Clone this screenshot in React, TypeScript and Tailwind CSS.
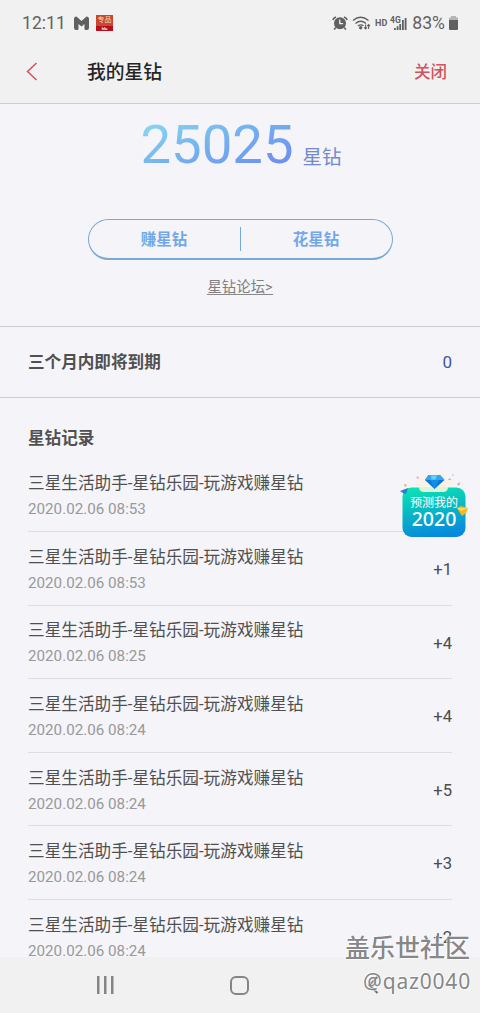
import type { ReactNode } from 'react'

interface StarRecord {
  id: number
  title: string
  time: string
  amount: string | null
}

const TITLE = '三星生活助手-星钻乐园-玩游戏赚星钻'

const records: StarRecord[] = [
  { id: 1, title: TITLE, time: '2020.02.06 08:53', amount: null },
  { id: 2, title: TITLE, time: '2020.02.06 08:53', amount: '+1' },
  { id: 3, title: TITLE, time: '2020.02.06 08:25', amount: '+4' },
  { id: 4, title: TITLE, time: '2020.02.06 08:24', amount: '+4' },
  { id: 5, title: TITLE, time: '2020.02.06 08:24', amount: '+5' },
  { id: 6, title: TITLE, time: '2020.02.06 08:24', amount: '+3' },
  { id: 7, title: TITLE, time: '2020.02.06 08:24', amount: '+2' }
]

function StatusBar() {
  return (
    <div className="flex h-[46px] items-center justify-between pl-[22px] pr-[22px] text-[#626262]">
      <div className="flex items-center">
        <span className="w-[51px] pt-px text-[17.600px] leading-none">12:11</span>
        <svg width="17" height="14" viewBox="0 0 17 14">
          <path
            d="M1 3q0-2.500 2.500-2.500L8.500 5l5-4.500Q16 .5 16 3v9q0 2-2 2h-1.500q-1 0-1-1.500V8l-3 2.500-3-2.500v4.500q0 1.500-1 1.500H3q-2 0-2-2z"
            fill="#606060"
          />
        </svg>
        <div className="ml-[6px] flex h-4 w-[17px] flex-col overflow-hidden bg-[#c9462f]">
          <span className="h-[11px] text-center text-[7px] leading-[11px] text-[#f5dcb4]">
            专品
          </span>
          <span className="h-[5px] bg-[#b5101d] text-center text-[4px] font-bold leading-[5px] text-white">
            hlu
          </span>
        </div>
      </div>

      <div className="flex items-center">
        <svg width="16" height="14" viewBox="0 0 16 14" fill="none">
          <circle cx="8" cy="7.300" r="6" fill="#606060" />
          <path
            d="M.8 4A5 5 0 0 1 4 .9M12 .9A5 5 0 0 1 15.200 4M4 11.500l-2 2M12 11.500l2 2"
            stroke="#606060"
            strokeWidth="1.600"
          />
          <path d="M7.800 3.500v4.200h3.300" stroke="#f1f1f1" strokeWidth="1.300" />
        </svg>
        <svg
          width="19"
          height="15"
          viewBox="0 0 19 15"
          fill="none"
          className="ml-[4px]"
          stroke="#606060"
          strokeWidth="1.400"
        >
          <path d="M1 4.500q7.500-6.500 15.500 0M3.500 7.500q5-4.500 10.500 0M6 10q2.700-2.200 5.500-.2" />
          <circle cx="8.700" cy="11.800" r="1" fill="#606060" />
          <path
            d="M13.600 8.500v4.500M12.200 11.300l1.400 1.700 1.400-1.700M16.600 13V8.500M15.200 10.200l1.400-1.700 1.400 1.700"
            strokeWidth="1.100"
          />
        </svg>
        <span className="ml-[4px] text-[9px] font-bold leading-none">HD</span>
        <svg
          width="17"
          height="15"
          viewBox="0 0 17 15"
          className="ml-[3px]"
          fill="#606060"
        >
          <path d="M4 12h1.800v2H4zM6.700 10.300h1.800V14H6.700zM9.300 8h1.800v6H9.300zM12 4h1.800v10H12zM14.700 2h1.800v12h-1.800z" />
          <text x="0" y="7.300" fontSize="8.500" fontWeight="700">
            4G
          </text>
        </svg>
        <span className="ml-[5px] pt-px text-[17.600px] leading-none">83%</span>
        <svg width="9" height="14" viewBox="0 0 9 14" className="ml-[4px]">
          <path d="M2 0h5v1.500h2v3H0v-3h2z" fill="#b5b5b5" />
          <path d="M0 4h9v9a1 1 0 0 1-1 1H1a1 1 0 0 1-1-1z" fill="#606060" />
        </svg>
      </div>
    </div>
  )
}

function Header() {
  return (
    <header className="h-[104px] shrink-0 border-b border-[#cecece] bg-[#f1f1f1]">
      <StatusBar />
      <div className="flex h-[50px] items-center pl-[26px] pr-[33px]">
        <svg width="12" height="19" viewBox="0 0 12 19" fill="none">
          <path d="M10.500 1L1.500 9.500l9 8.500" stroke="#cf5360" strokeWidth="1.500" />
        </svg>
        <h1 className="ml-[49px] pt-[4px] text-[18.800px] font-medium leading-none text-[#252525]">
          我的星钻
        </h1>
        <button className="ml-auto pt-[4px] text-[16.500px] font-medium leading-none text-[#d0525f]">
          关闭
        </button>
      </div>
    </header>
  )
}

function Balance() {
  return (
    <section className="flex h-[223px] flex-col items-center border-b border-[#cecece]">
      <div className="mt-[8px] flex h-[64px] items-baseline pl-[2px]">
        <span className="bg-linear-to-br from-[#91e0ef] via-[#73b0ef] to-[#6c83ef] bg-clip-text text-[54.500px] leading-[64px] text-transparent">
          25025
        </span>
        <span className="relative top-px ml-[9px] text-[19.500px] leading-none text-[#7289cf]">
          星钻
        </span>
      </div>
      <div className="mt-[43px] flex h-[41px] w-[305px] items-center rounded-full border border-b-2 border-[#78a9d8] text-[15.500px] font-bold text-[#70a8e9]">
        <button className="flex-1 pt-[3px] leading-none">赚星钻</button>
        <div className="h-6 w-px bg-[#70a8df]" />
        <button className="flex-1 pt-[3px] leading-none">花星钻</button>
      </div>
      <a className="mt-[19px] h-[16px] border-b border-[#888888] pt-px text-[14.400px] leading-[16px] text-[#808080]">
        星钻论坛&gt;
      </a>
    </section>
  )
}

function SectionTitle({ children }: { children: ReactNode }) {
  return (
    <h2 className="pt-px text-[16.600px] font-bold leading-[20px] text-[#505050]">
      {children}
    </h2>
  )
}

function RecordRow({ record }: { record: StarRecord }) {
  return (
    <li className="flex h-[73.600px] shrink-0 items-center justify-between border-b border-[#dedee2]">
      <div className="pt-[5px]">
        <p className="h-[24px] text-[16.650px] leading-[24px] text-[#505050]">
          {record.title}
        </p>
        <p className="h-[26px] text-[15.200px] leading-[27px] text-[#999999]">
          {record.time}
        </p>
      </div>
      {record.amount && (
        <span className="pt-[4px] text-[16.600px] text-[#4c4c4c]">
          {record.amount}
        </span>
      )}
    </li>
  )
}

function PredictBadge() {
  return (
    <div className="absolute left-[399px] top-[470px] h-[68px] w-[70px]">
      <svg width="70" height="68" viewBox="0 0 70 68" className="absolute inset-0">
        <defs>
          <linearGradient id="card" x1="0.400" y1="0" x2="0.600" y2="1">
            <stop offset="0" stopColor="#0be0b3" />
            <stop offset=".5" stopColor="#07b3c7" />
            <stop offset="1" stopColor="#0787e0" />
          </linearGradient>
        </defs>
        <path d="M18 16L15 9l8 2 2-8 9 3 9-4 5 8 6-1-5 9z" fill="#fbf1e5" />
        <rect x="3.500" y="17.500" width="63" height="49.500" rx="9" fill="url(#card)" />
        <path d="M20 17h29q0 5-5 5H25q-5 0-5-5z" fill="#ddf5d8" />
        <path d="M29.500 5h11.500l4.500 5L35.500 19 26 10z" fill="#0878d7" />
        <path d="M29.500 5h11.500l4.500 5H26z" fill="#35a5ee" />
        <path d="M31 10h9l-4.500 9z" fill="#158de7" />
        <path d="M32 5.500h6l-1.500 4h-4z" fill="#66d2fa" />
        <path d="M1 21l8-3-2 6-3-1z" fill="#287fd3" />
        <path d="M58 38l4-2 7 2-2 5-4 3z" fill="#ffb51b" />
        <path d="M58 38h11l-7 3z" fill="#ffda57" />
        <path d="M5 14l3 1-2 2z" fill="#f4a43b" />
        <path d="M17 8l2-2 1 3z" fill="#f5a4a0" />
        <path d="M49 10l2-2 1 2zM58 14l3-2-1 4z" fill="#e99e86" />
        <path d="M53 5l1-1 1 2z" fill="#66cfba" />
      </svg>
      <div className="relative flex flex-col items-center pt-[26px] text-white">
        <span className="text-[12px] leading-[14px]">预测我的</span>
        <span className="font-['Noto_Sans','Noto_Sans_CJK_SC',sans-serif] text-[19.500px] font-medium leading-[18px]">
          2020
        </span>
      </div>
    </div>
  )
}

function NavigationBar() {
  return (
    <nav className="flex h-14 shrink-0 items-center bg-[#f1f1f1]">
      <svg
        width="18"
        height="18"
        viewBox="0 0 18 18"
        className="ml-[96px]"
        fill="#858585"
      >
        <path d="M1 0h2.500v18H1zM8 0h2.500v18H8zM15 0h2.500v18H15z" />
      </svg>
      <div className="ml-[116px] h-[19px] w-[19px] rounded-[6px] border-2 border-[#858585]" />
      <svg
        width="11"
        height="18"
        viewBox="0 0 11 18"
        className="ml-[119px]"
        fill="none"
      >
        <path d="M9.500 1L1.500 9l8 8" stroke="#6c6c6c" strokeWidth="2" />
      </svg>
    </nav>
  )
}

function Watermark() {
  return (
    <div className="pointer-events-none absolute right-[10px] top-[930px] flex flex-col items-end text-[#777777]/90 [text-shadow:-1px_-1px_1px_rgba(255,255,255,0.7),1px_1px_1px_rgba(255,255,255,0.7)]">
      <span className="text-[25px] font-medium leading-[38px]">盖乐世社区</span>
      <span className="-mr-px font-['Noto_Sans','Noto_Sans_CJK_SC',sans-serif] text-[21px] leading-[27px] tracking-[0.800px]">
        @qaz0040
      </span>
    </div>
  )
}

export default function App() {
  return (
    <div className="relative flex h-[1013px] w-[480px] flex-col overflow-hidden bg-[#f4f4f9] font-['Roboto','Noto_Sans_CJK_SC',sans-serif]">
      <Header />
      <main className="min-h-0 flex-1 overflow-hidden">
        <Balance />
        <section className="flex h-[71px] items-center justify-between border-b border-[#cecece] px-7">
          <SectionTitle>三个月内即将到期</SectionTitle>
          <span className="pt-px text-[17px] text-[#3d569f]">0</span>
        </section>
        <section className="px-7 pt-[30px]">
          <SectionTitle>星钻记录</SectionTitle>
          <ul className="mt-[9.500px] flex flex-col">
            {records.map((record) => (
              <RecordRow key={record.id} record={record} />
            ))}
          </ul>
        </section>
      </main>
      <NavigationBar />
      <PredictBadge />
      <Watermark />
    </div>
  )
}
